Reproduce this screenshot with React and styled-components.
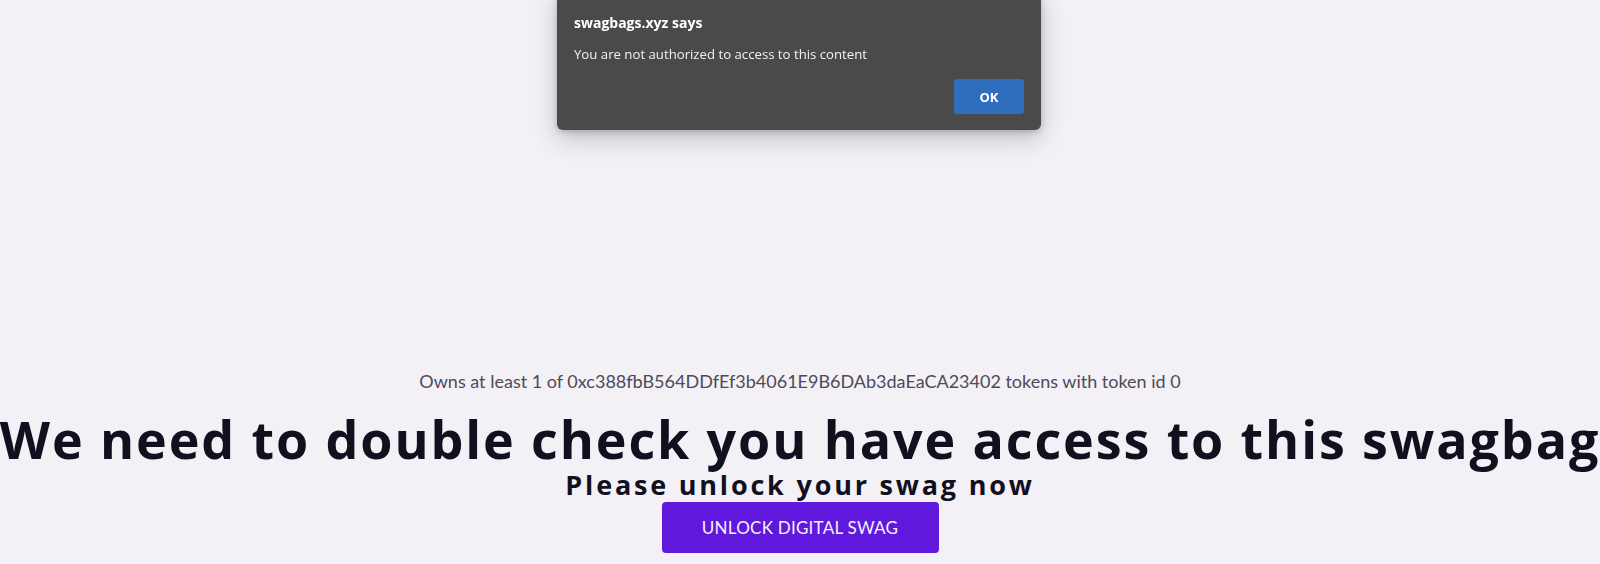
import React from 'react';
import styled, { createGlobalStyle } from 'styled-components';

const GlobalStyle = createGlobalStyle`
  html, body {
    margin: 0;
    padding: 0;
    background: #f3f1f6;
    overflow: hidden;
  }
`;

const App = () => {
  return (
    <>
      <GlobalStyle />
      <Page>
        <Owns>Owns at least 1 of 0xc388fbB564DDfEf3b4061E9B6DAb3daEaCA23402 tokens with token id 0</Owns>
        <Heading>We need to double check you have access to this swagbag</Heading>
        <SubHeading>Please unlock your swag now</SubHeading>
        <UnlockButton>UNLOCK DIGITAL SWAG</UnlockButton>
      </Page>

      {/* browser alert */}
      <Alert>
        <AlertTitle>swagbags.xyz says</AlertTitle>
        <AlertMessage>You are not authorized to access to this content</AlertMessage>
        <AlertFooter>
          <OkButton>OK</OkButton>
        </AlertFooter>
      </Alert>
    </>
  );
};

export default App;

const Page = styled.div`
  height: 100vh;
  box-sizing: border-box;
  display: flex;
  flex-direction: column;
  align-items: center;
  justify-content: flex-end;
  padding-bottom: 11px;
  text-align: center;
`;

const Owns = styled.p`
  margin: 0 0 18px;
  font-family: Lato, 'Open Sans', sans-serif;
  font-size: 18px;
  line-height: 24px;
  color: #4e4a5a;
`;

const Heading = styled.h1`
  margin: 0 0 3px;
  font-family: 'Open Sans', 'Noto Sans', sans-serif;
  font-weight: 700;
  font-size: 52px;
  line-height: 56px;
  letter-spacing: 1.9px;
  color: #120f1f;
  white-space: nowrap;
`;

const SubHeading = styled.h2`
  margin: 0 0 2px;
  font-family: 'Open Sans', 'Noto Sans', sans-serif;
  font-weight: 700;
  font-size: 27px;
  line-height: 30px;
  letter-spacing: 2.8px;
  color: #120f1f;
`;

const UnlockButton = styled.button`
  width: 277px;
  height: 51px;
  border: none;
  border-radius: 4px;
  background: #6118dd;
  color: #f4f0ff;
  font-family: Lato, 'Open Sans', sans-serif;
  font-size: 17px;
  letter-spacing: 0.25px;
  cursor: pointer;
`;

const Alert = styled.div`
  position: fixed;
  top: -8px;
  left: 557px;
  width: 484px;
  box-sizing: border-box;
  padding: 21px 17px 16px;
  background: #4a4a4a;
  border-radius: 6px;
  box-shadow: 0 8px 24px rgba(60, 60, 70, 0.28), 0 2px 6px rgba(0, 0, 0, 0.2);
  font-family: 'Open Sans', 'Noto Sans', sans-serif;
  color: #ffffff;
`;

const AlertTitle = styled.div`
  font-size: 14px;
  font-weight: 700;
  line-height: 20px;
`;

const AlertMessage = styled.div`
  margin-top: 12px;
  font-size: 13.2px;
  line-height: 18px;
  color: #f2f2f2;
`;

const AlertFooter = styled.div`
  display: flex;
  justify-content: flex-end;
  margin-top: 16px;
`;

const OkButton = styled.button`
  width: 70px;
  height: 35px;
  border: none;
  border-radius: 3px;
  background: #2f6ebd;
  color: #ffffff;
  font-family: 'Open Sans', 'Noto Sans', sans-serif;
  font-size: 13px;
  font-weight: 700;
`;
